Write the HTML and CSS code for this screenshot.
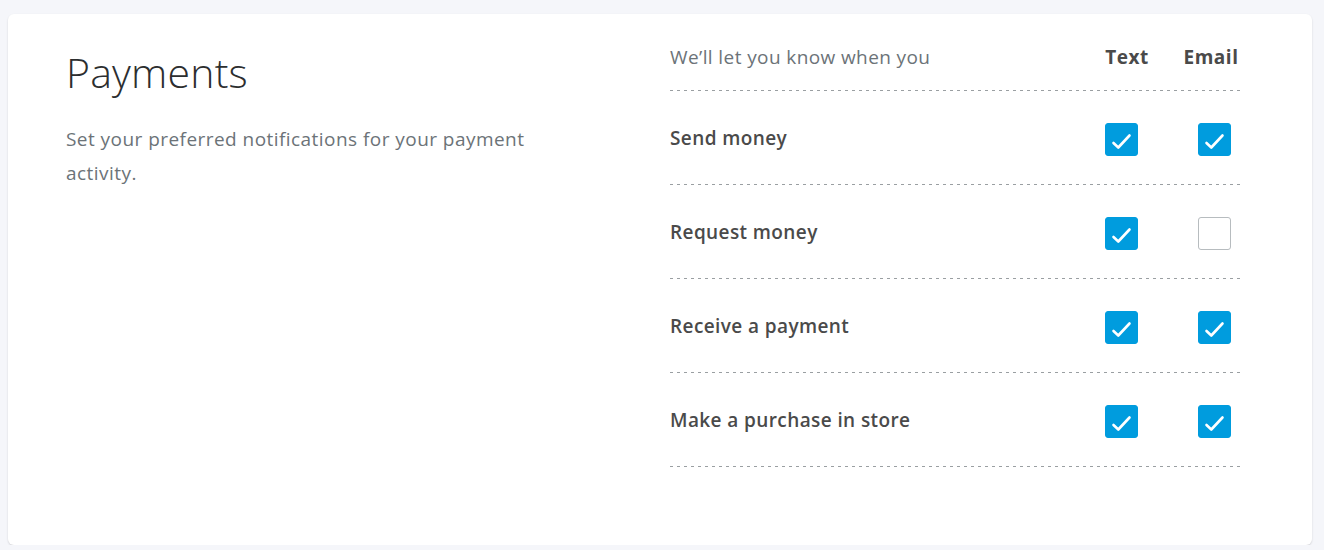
FILE: index.html
```html
<!DOCTYPE html>
<html lang="en">
<head>
  <meta charset="UTF-8" />
  <meta name="viewport" content="width=device-width, initial-scale=1" />
  <title>Payments notifications</title>
  <link rel="stylesheet" href="styles.css">
</head>
<body>
  <div class="card">
    <div class="intro">
      <h2>Payments</h2>
      <p>Set your preferred notifications for your payment activity.</p>
    </div>

    <div class="prefs">
      <div class="row head">
        <div class="label">We’ll let you know when you</div>
        <div class="col">Text</div>
        <div class="col email">Email</div>
      </div>

      <div class="row">
        <div class="label">Send money</div>
        <div class="col"><span class="box checked"></span></div>
        <div class="col email"><span class="box checked"></span></div>
      </div>

      <div class="row">
        <div class="label">Request money</div>
        <div class="col"><span class="box checked"></span></div>
        <div class="col email"><span class="box"></span></div>
      </div>

      <div class="row">
        <div class="label">Receive a payment</div>
        <div class="col"><span class="box checked"></span></div>
        <div class="col email"><span class="box checked"></span></div>
      </div>

      <div class="row">
        <div class="label">Make a purchase in store</div>
        <div class="col"><span class="box checked"></span></div>
        <div class="col email"><span class="box checked"></span></div>
      </div>
    </div>
  </div>

  <script>
    // draw a tick inside every checked box
    const tick = '<svg width="33" height="33" viewBox="0 0 33 33"><path d="M8.5 20l4.8 4.5L24.5 12.5" fill="none" stroke="#fff" stroke-width="2.6" stroke-linecap="round" stroke-linejoin="round"/></svg>';
    document.querySelectorAll('.box').forEach(box => {
      if (box.classList.contains('checked')) box.innerHTML = tick;
      box.addEventListener('click', () => {
        box.classList.toggle('checked');
        box.innerHTML = box.classList.contains('checked') ? tick : '';
      });
    });
  </script>
</body>
</html>
```

FILE: styles.css
```css
body {
  margin: 0;
  padding: 14px 12px 0 8px;
  background: #f5f6fa;
  font-family: 'Open Sans', 'Liberation Sans', sans-serif;
  color: #4a4a4a;
}
.card {
  display: flex;
  height: 531px;
  background: white;
  border-radius: 6px;
  box-shadow: 0 1px 2px rgba(0,0,0,0.15);
  box-sizing: border-box;
}
.intro {
  width: 662px;
  padding: 31px 0 0 58px;
  box-sizing: border-box;
}
.intro h2 {
  margin: 0;
  font-size: 41px;
  font-weight: 300;
  letter-spacing: 0.2px;
  color: #2c2e2f;
  line-height: 54px;
}
.intro p {
  margin: 23px 0 0;
  width: 490px;
  font-size: 19px;
  letter-spacing: 0.45px;
  line-height: 34px;
  color: #6c7378;
}
.prefs {
  width: 574px;
  margin-top: 10px;
}
.row {
  display: flex;
  align-items: center;
  height: 93px;
  padding-bottom: 1px;
  background: repeating-linear-gradient(90deg, #9a9fa2 0 3px, transparent 3px 7px) bottom / 100% 1px no-repeat;
}
.row.head {
  height: 66px;
}
.label {
  flex: 1;
  font-size: 19px;
  font-weight: 600;
  letter-spacing: 0.4px;
}
.head .label {
  font-weight: 400;
  color: #6c7378;
}
.col {
  width: 126px;
  display: flex;
  justify-content: center;
  font-size: 19px;
  font-weight: 700;
  letter-spacing: 0.5px;
}
.col.email {
  width: 60px;
}
.head .col {
  padding-left: 12px;
  box-sizing: border-box;
}
.head .col.email {
  padding-left: 0;
  padding-right: 6px;
}
.box {
  width: 33px;
  height: 33px;
  border: 1px solid #b7bcbf;
  border-radius: 3px;
  box-sizing: border-box;
  cursor: pointer;
  margin-top: 3px;
}
.box svg {
  display: block;
  margin: -1px;
}
.box.checked {
  background: #009cde;
  border-color: #009cde;
}
```
